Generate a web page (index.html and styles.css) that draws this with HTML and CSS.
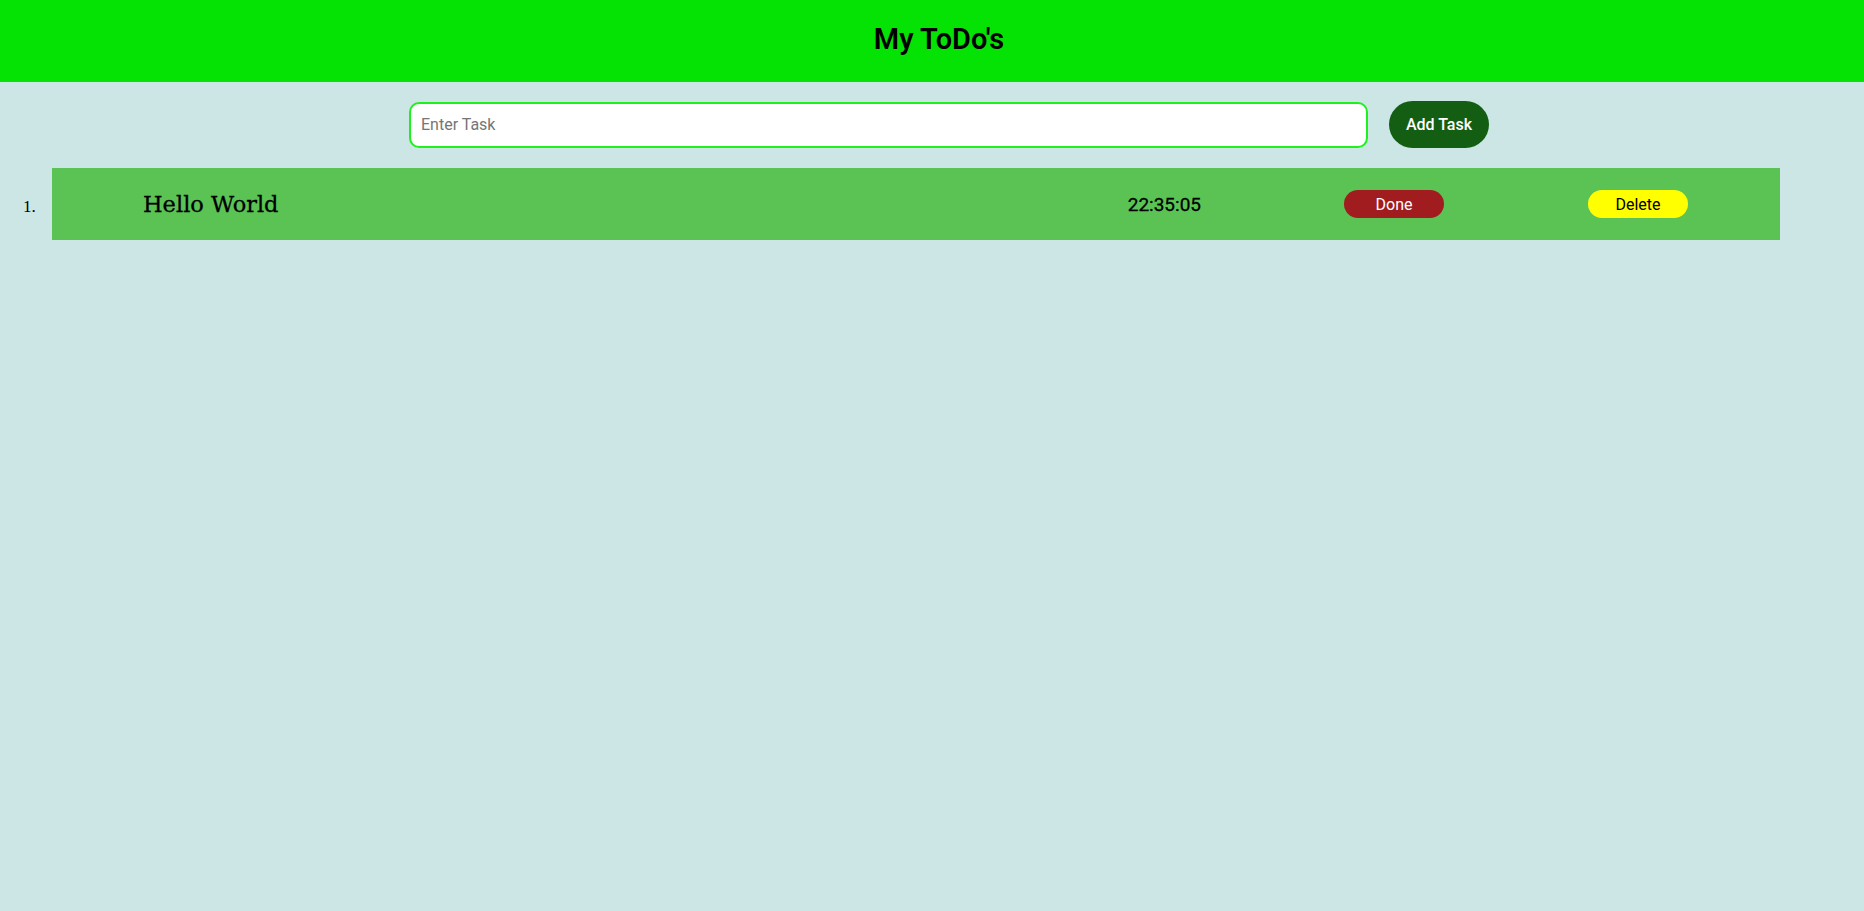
FILE: index.html
```html
<!DOCTYPE html>
<html lang="en">
<head>
<meta charset="utf-8">
<title>My ToDo's</title>
<link rel="stylesheet" href="styles.css">
</head>
<body>
<header class="header">
  <h1 class="title">My ToDo's</h1>
</header>
<main>
  <form class="add-form">
    <input class="task-input" type="text" placeholder="Enter Task">
    <button class="add-btn" type="button">Add Task</button>
  </form>
  <ol class="task-list">
    <li class="task-item">
      <div class="task-row">
        <span class="task-text">Hello World</span>
        <span class="task-time">22:35:05</span>
        <button class="btn btn-done" type="button">Done</button>
        <button class="btn btn-delete" type="button">Delete</button>
      </div>
    </li>
  </ol>
</main>
</body>
</html>
```

FILE: styles.css
```css
html, body {
  margin: 0;
  padding: 0;
}
body {
  background: #cce6e6;
  font-family: "Liberation Serif", serif;
  min-height: 911px;
}
.header {
  height: 82px;
  background: #05e305;
  display: flex;
  align-items: center;
  justify-content: center;
  padding-left: 14px;
}
.title {
  margin: 0;
  font-family: Roboto, "Liberation Sans", sans-serif;
  font-weight: 600;
  font-size: 29px;
  color: #000;
  line-height: 1;
  padding-bottom: 3px;
}
.add-form {
  display: flex;
  justify-content: center;
  align-items: center;
  gap: 21px;
  margin: 19px 0 0 0;
  padding-left: 34px;
}
.task-input {
  box-sizing: border-box;
  width: 959px;
  height: 46px;
  border: 2px solid #1ef01e;
  border-radius: 10px;
  padding: 0 10px;
  font-family: Roboto, "Liberation Sans", sans-serif;
  font-size: 16px;
  background: #fff;
  outline: none;
}
.task-input::placeholder {
  color: #757575;
}
.add-btn {
  box-sizing: border-box;
  width: 100px;
  height: 47px;
  border: none;
  border-radius: 24px;
  background: #145e14;
  color: #fff;
  font-family: Roboto, "Liberation Sans", sans-serif;
  font-size: 16px;
  font-weight: 500;
  padding: 0;
}
.task-list {
  margin: 20px 0 0 0;
  padding-left: 40px;
  font-size: 17px;
}
.task-row {
  box-sizing: border-box;
  height: 72px;
  margin: 0 84px 0 12px;
  background: #5ac354;
  display: flex;
  align-items: center;
  padding: 0 92px 0 91px;
}
.task-text {
  flex: 1;
  font-family: "DejaVu Serif", serif;
  font-size: 22.5px;
  color: #000;
  padding-bottom: 1px;
  -webkit-text-stroke: 0.3px #000;
}
.task-time {
  font-family: Roboto, "Liberation Sans", sans-serif;
  font-size: 19px;
  font-weight: 400;
  color: #000;
  margin-right: 143px;
  -webkit-text-stroke: 0.3px #000;
}
.btn {
  box-sizing: border-box;
  width: 100px;
  height: 28px;
  border: none;
  border-radius: 14px;
  font-family: Roboto, "Liberation Sans", sans-serif;
  font-size: 16px;
  padding: 0;
}
.btn-done {
  background: #a01c1f;
  color: #fff;
  margin-right: 144px;
}
.btn-delete {
  background: #ffff00;
  color: #000;
}
```
